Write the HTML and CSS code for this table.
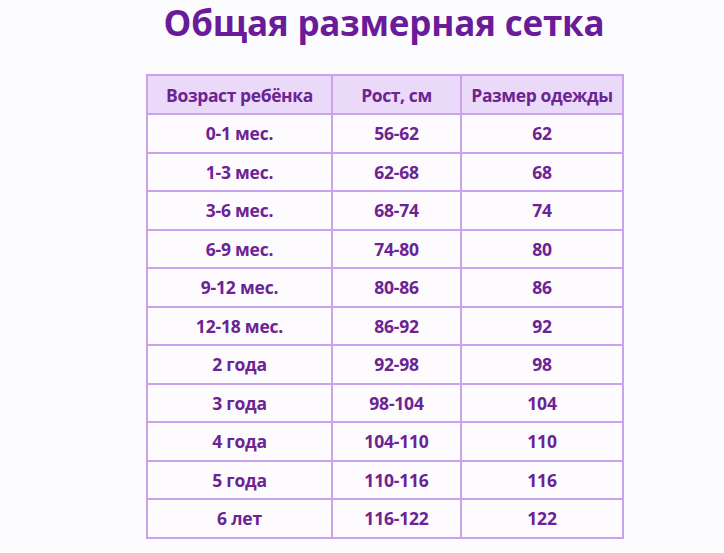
FILE: index.html
```html
<!DOCTYPE html>
<html lang="ru">
<head>
<meta charset="utf-8">
<link rel="stylesheet" href="styles.css">
</head>
<body>
<div class="wrap">
  <h1 class="title">Общая размерная сетка</h1>
  <table class="grid">
    <thead>
      <tr><th class="c1">Возраст ребёнка</th><th class="c2">Рост, см</th><th class="c3">Размер одежды</th></tr>
    </thead>
    <tbody>
      <tr><td>0-1 мес.</td><td>56-62</td><td>62</td></tr>
      <tr><td>1-3 мес.</td><td>62-68</td><td>68</td></tr>
      <tr><td>3-6 мес.</td><td>68-74</td><td>74</td></tr>
      <tr><td>6-9 мес.</td><td>74-80</td><td>80</td></tr>
      <tr><td>9-12 мес.</td><td>80-86</td><td>86</td></tr>
      <tr><td>12-18 мес.</td><td>86-92</td><td>92</td></tr>
      <tr><td>2 года</td><td>92-98</td><td>98</td></tr>
      <tr><td>3 года</td><td>98-104</td><td>104</td></tr>
      <tr><td>4 года</td><td>104-110</td><td>110</td></tr>
      <tr><td>5 года</td><td>110-116</td><td>116</td></tr>
      <tr><td>6 лет</td><td>116-122</td><td>122</td></tr>
    </tbody>
  </table>
</div>
</body>
</html>
```
FILE: styles.css
```css
html, body {
  margin: 0;
  padding: 0;
  background: #fcfbfd;
}
body {
  font-family: "Open Sans", "Noto Sans", sans-serif;
  width: 724px;
  height: 553px;
  overflow: hidden;
}
.wrap {
  margin-left: 146px;
  width: 480px;
}
.title {
  margin: 0;
  height: 74px;
  text-align: center;
  font-size: 35px;
  line-height: 46px;
  font-weight: 700;
  color: #6a1b9a;
  letter-spacing: -0.2px;
  width: 476px;
}
.grid {
  width: 478px;
  border-collapse: collapse;
  table-layout: fixed;
  color: #6c2493;
  font-weight: 700;
  font-size: 17.5px;
}
.grid th, .grid td {
  border: 2px solid #caa3ee;
  text-align: center;
  padding: 0;
  height: 36.5px;
  letter-spacing: -0.2px;
}
.grid th {
  background: #ead9f8;
  height: 37px;
  letter-spacing: -0.4px;
}
.grid td {
  background: #fdfbfe;
}
.c1 { width: 183px; }
.c2 { width: 127px; }
.c3 { width: auto; }
```
